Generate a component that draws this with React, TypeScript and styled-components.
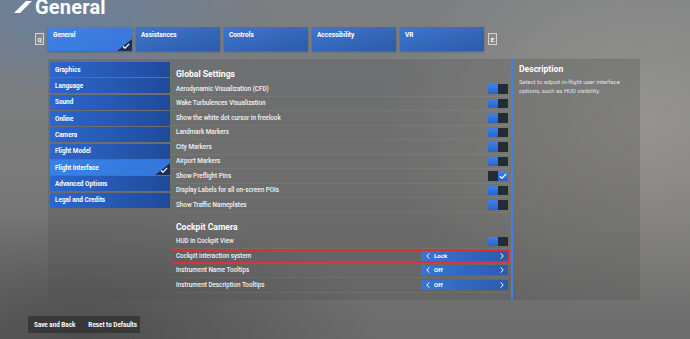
import React from "react";
import styled, { createGlobalStyle } from "styled-components";

const GlobalStyle = createGlobalStyle`
  html, body {
    margin: 0;
    padding: 0;
    background: #6e6e6e;
  }
  * {
    box-sizing: border-box;
  }
`;

const tabs = ["General", "Assistances", "Controls", "Accessibility", "VR"];
const sections = [
  "Graphics",
  "Language",
  "Sound",
  "Online",
  "Camera",
  "Flight Model",
  "Flight Interface",
  "Advanced Options",
  "Legal and Credits",
];

type Setting = { label: string; kind: "toggle" | "select"; on?: boolean; value?: string; focus?: boolean };

const globalSettings: Setting[] = [
  { label: "Aerodynamic Visualization (CFD)", kind: "toggle" },
  { label: "Wake Turbulences Visualization", kind: "toggle" },
  { label: "Show the white dot cursor in freelook", kind: "toggle" },
  { label: "Landmark Markers", kind: "toggle" },
  { label: "City Markers", kind: "toggle" },
  { label: "Airport Markers", kind: "toggle" },
  { label: "Show Preflight Pins", kind: "toggle", on: true },
  { label: "Display Labels for all on-screen POIs", kind: "toggle" },
  { label: "Show Traffic Nameplates", kind: "toggle" },
];

const cockpitSettings: Setting[] = [
  { label: "HUD in Cockpit View", kind: "toggle" },
  { label: "Cockpit interaction system", kind: "select", value: "Lock", focus: true },
  { label: "Instrument Name Tooltips", kind: "select", value: "Off" },
  { label: "Instrument Description Tooltips", kind: "select", value: "Off" },
];

const Check = () => (
  <svg width="8" height="6" viewBox="0 0 8 6">
    <path d="M0.8 3.2 L3 5.2 L7.2 0.8" fill="none" stroke="#fff" strokeWidth="1.2" />
  </svg>
);

const Chevron = ({ dir }: { dir: "left" | "right" }) => (
  <svg width="4" height="6" viewBox="0 0 4 6">
    <path
      d={dir === "left" ? "M3.3 0.4 L0.8 3 L3.3 5.6" : "M0.7 0.4 L3.2 3 L0.7 5.6"}
      fill="none"
      stroke="#fff"
      strokeWidth="1"
    />
  </svg>
);

export default function App() {
  const renderRow = (s: Setting) => (
    <Row key={s.label} $focus={!!s.focus}>
      <RowLabel>{s.label}</RowLabel>
      {s.kind === "toggle" ? (
        <Toggle>
          <ToggleHalf $active={!s.on} />
          <ToggleHalf $active={!!s.on}>{s.on && <Check />}</ToggleHalf>
        </Toggle>
      ) : (
        <Selector>
          <Chevron dir="left" />
          <SelectorValue>{s.value}</SelectorValue>
          <Chevron dir="right" />
        </Selector>
      )}
    </Row>
  );

  return (
    <Page>
      <GlobalStyle />
      <Header>
        <svg width="20" height="12" viewBox="0 0 20 12">
          <polygon points="1,12 13,0 19,0 7,12" fill="#fff" />
        </svg>
        <Title>General</Title>
      </Header>
      <TabRow>
        <KeyHint>Q</KeyHint>
        {tabs.map((t, i) => (
          <Tab key={t} $selected={i === 0}>
            {t}
            {i === 0 && (
              <Corner>
                <Check />
              </Corner>
            )}
          </Tab>
        ))}
        <KeyHint>E</KeyHint>
      </TabRow>
      <Main>
        <SettingsPanel>
          <Sidebar>
            {sections.map((s) => (
              <SideItem key={s} $selected={s === "Flight Interface"}>
                {s}
                {s === "Flight Interface" && (
                  <Corner>
                    <Check />
                  </Corner>
                )}
              </SideItem>
            ))}
          </Sidebar>
          <Content>
            <Heading>Global Settings</Heading>
            {globalSettings.map(renderRow)}
            <Heading $spaced>Cockpit Camera</Heading>
            {cockpitSettings.map(renderRow)}
          </Content>
        </SettingsPanel>
        <Scrollbar />
        <Description>
          <DescTitle>Description</DescTitle>
          <DescText>Select to adjust in-flight user interface options, such as HUD visibility.</DescText>
        </Description>
      </Main>
      <Footer>
        <FooterButton>Save and Back</FooterButton>
        <FooterButton>Reset to Defaults</FooterButton>
      </Footer>
    </Page>
  );
}

const Page = styled.div`
  position: relative;
  width: 690px;
  height: 339px;
  overflow: hidden;
  font-family: Roboto, "Liberation Sans", sans-serif;
  color: #fff;
  background:
    radial-gradient(ellipse 220px 90px at 60px 10px, rgba(90, 130, 180, 0.55), transparent),
    radial-gradient(ellipse 260px 200px at 640px 120px, rgba(170, 168, 160, 0.55), transparent),
    radial-gradient(ellipse 300px 120px at 80px 330px, rgba(40, 40, 40, 0.45), transparent),
    linear-gradient(180deg, #7c7e80 0%, #7a7a7a 50%, #6c6c6c 100%);
`;

const Header = styled.div`
  display: flex;
  align-items: center;
  gap: 2px;
  height: 20px;
  padding-left: 13px;
  margin-top: -3px;
`;

const Title = styled.div`
  font-size: 20px;
  font-weight: 700;
  line-height: 1;
  letter-spacing: 0.2px;
`;

const TabRow = styled.div`
  display: flex;
  align-items: center;
  gap: 4px;
  height: 24px;
  padding-left: 35px;
  margin-top: 10px;
`;

const KeyHint = styled.div`
  width: 9px;
  height: 12px;
  border: 1px solid rgba(230, 230, 230, 0.8);
  background: rgba(140, 140, 140, 0.6);
  font-size: 6px;
  font-weight: 700;
  display: flex;
  align-items: center;
  justify-content: center;
`;

const Tab = styled.div<{ $selected: boolean }>`
  position: relative;
  width: 84px;
  height: 24px;
  padding: 4px 5px;
  font-size: 6.5px;
  font-weight: 700;
  background: ${(p) =>
    p.$selected
      ? "linear-gradient(160deg, #3f83e4 0%, #3676d8 100%)"
      : "linear-gradient(165deg, #3d76cf 0%, #2c5ba8 100%)"};
  box-shadow: 0 1px 2px rgba(0, 0, 0, 0.25);
`;

const Corner = styled.div`
  position: absolute;
  right: 0;
  bottom: 0;
  width: 15px;
  height: 12px;
  background: #1b2f5c;
  clip-path: polygon(100% 0, 100% 100%, 0 100%);
  display: flex;
  align-items: flex-end;
  justify-content: flex-end;
  padding: 0 2px 2px 0;
`;

const Main = styled.div`
  display: flex;
  height: 242px;
  margin-top: 7px;
  margin-left: 48px;
`;

const SettingsPanel = styled.div`
  display: flex;
  width: 463px;
  padding: 3px 2px 0 2px;
  background: rgba(80, 80, 80, 0.28);
  border-top: 1px solid rgba(160, 160, 160, 0.35);
`;

const Sidebar = styled.div`
  display: flex;
  flex-direction: column;
  gap: 1.35px;
  width: 120px;
  flex-shrink: 0;
`;

const SideItem = styled.div<{ $selected: boolean }>`
  position: relative;
  height: 15px;
  padding-left: 5px;
  display: flex;
  align-items: center;
  font-size: 6.4px;
  font-weight: 700;
  background: ${(p) =>
    p.$selected
      ? "linear-gradient(90deg, #3a80e8 0%, #3377dc 100%)"
      : "linear-gradient(90deg, #2c67cc 0%, #2557b0 60%, #1f4a99 100%)"};
`;

const Content = styled.div`
  flex: 1;
  padding: 4px 0 0 1px;
  display: flex;
  flex-direction: column;
`;

const Heading = styled.div<{ $spaced?: boolean }>`
  height: 16px;
  margin-top: ${(p) => (p.$spaced ? "6px" : "0")};
  padding-left: 5px;
  display: flex;
  align-items: center;
  font-size: 8.6px;
  font-weight: 700;
`;

const Row = styled.div<{ $focus: boolean }>`
  position: relative;
  height: 14.5px;
  flex-shrink: 0;
  display: flex;
  align-items: center;
  justify-content: space-between;
  padding: 0 1px 0 5px;
  border-bottom: 1px solid rgba(255, 255, 255, 0.06);
  background: ${(p) => (p.$focus ? "rgba(90, 90, 90, 0.25)" : "transparent")};

  &::after {
    content: "";
    display: ${(p) => (p.$focus ? "block" : "none")};
    position: absolute;
    left: 0;
    right: 0;
    top: 0.5px;
    bottom: -0.5px;
    border: 1.5px solid #d8303d;
    box-shadow: 0 0 1px rgba(216, 48, 61, 0.8);
    z-index: 2;
    pointer-events: none;
  }
`;

const RowLabel = styled.div`
  font-size: 6.3px;
  font-weight: 500;
  color: #f4f4f4;
`;

const Toggle = styled.div`
  display: flex;
  width: 20px;
  height: 9.5px;
`;

const ToggleHalf = styled.div<{ $active: boolean }>`
  flex: 1;
  display: flex;
  align-items: center;
  justify-content: center;
  background: ${(p) => (p.$active ? "linear-gradient(180deg, #3b82ea 0%, #2a63c8 100%)" : "#262a34")};
`;

const Selector = styled.div`
  display: flex;
  align-items: center;
  width: 87px;
  height: 10px;
  padding: 0 4px 0 5px;
  background: linear-gradient(90deg, #3b74d0 0%, #2a5bb0 100%);
`;

const SelectorValue = styled.div`
  flex: 1;
  padding-left: 4px;
  font-size: 6.2px;
  font-weight: 700;
`;

const Scrollbar = styled.div`
  width: 2px;
  background: #3d82e6;
`;

const Description = styled.div`
  width: 127px;
  padding: 5px 6px;
  background: rgba(80, 80, 80, 0.3);
  border-top: 1px solid rgba(160, 160, 160, 0.35);
`;

const DescTitle = styled.div`
  font-size: 8.6px;
  font-weight: 700;
  margin-bottom: 3px;
`;

const DescText = styled.div`
  font-size: 6px;
  line-height: 9px;
  color: #e4e4e4;
`;

const Footer = styled.div`
  display: flex;
  align-items: center;
  gap: 13px;
  width: 112px;
  height: 17px;
  margin: 16px 0 0 28px;
  padding-left: 6px;
  background: rgba(45, 45, 45, 0.7);
`;

const FooterButton = styled.div`
  font-size: 6.3px;
  font-weight: 700;
  white-space: nowrap;
`;
